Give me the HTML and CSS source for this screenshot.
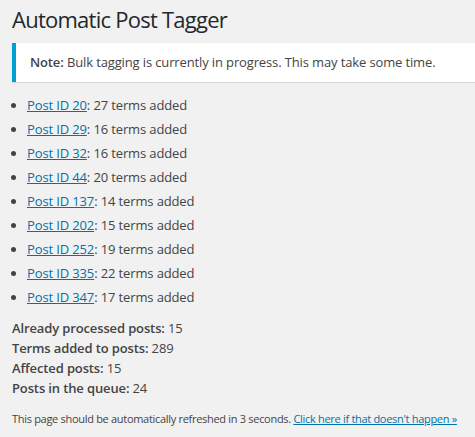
FILE: index.html
```html
<!DOCTYPE html>
<html>
<head>
<meta charset="utf-8">
<link rel="stylesheet" href="styles.css">
</head>
<body>
<div class="wrap">
  <h1 class="title">Automatic Post Tagger</h1>
  <div class="notice">
    <p><strong>Note:</strong> Bulk tagging is currently in progress. This may take some time.</p>
  </div>
  <ul class="posts">
    <li><a href="#">Post ID 20</a>: 27 terms added</li>
    <li><a href="#">Post ID 29</a>: 16 terms added</li>
    <li><a href="#">Post ID 32</a>: 16 terms added</li>
    <li><a href="#">Post ID 44</a>: 20 terms added</li>
    <li><a href="#">Post ID 137</a>: 14 terms added</li>
    <li><a href="#">Post ID 202</a>: 15 terms added</li>
    <li><a href="#">Post ID 252</a>: 19 terms added</li>
    <li><a href="#">Post ID 335</a>: 22 terms added</li>
    <li><a href="#">Post ID 347</a>: 17 terms added</li>
  </ul>
  <div class="stats">
    <div><strong>Already processed posts:</strong> 15</div>
    <div><strong>Terms added to posts:</strong> 289</div>
    <div><strong>Affected posts:</strong> 15</div>
    <div><strong>Posts in the queue:</strong> 24</div>
  </div>
  <p class="refresh">This page should be automatically refreshed in 3 seconds. <a href="#">Click here if that doesn't happen »</a></p>
</div>
</body>
</html>
```
FILE: styles.css
```css
html, body {
  margin: 0;
  padding: 0;
  background: #f1f1f1;
}
body {
  font-family: "Open Sans", sans-serif;
  font-size: 13px;
  letter-spacing: -0.13px;
  color: #444;
}
.wrap {
  padding: 0 0 0 12px;
}
.title {
  margin: 0;
  padding: 5px 0 0;
  font-size: 22px;
  font-weight: 400;
  letter-spacing: -0.75px;
  line-height: 29px;
  color: #23282d;
}
.notice {
  margin: 9px 0 14px;
  background: #fff;
  border-left: 4px solid #00a0d2;
  box-shadow: 0 1px 1px 0 rgba(0, 0, 0, 0.1);
  padding: 1px 12px;
}
.notice p {
  margin: 7px 0;
  padding: 2px;
  line-height: 19px;
}
.notice strong {
  font-weight: 600;
}
a {
  color: #0073aa;
  text-decoration: underline;
}
.posts {
  margin: 0;
  padding: 0 0 0 15px;
  list-style: disc outside;
}
.posts li {
  line-height: 18px;
  margin-bottom: 6px;
}
.stats {
  margin-top: 12px;
  line-height: 20px;
}
.stats strong {
  font-weight: 600;
}
.refresh {
  margin: 12px 0 0;
  font-size: 11px;
  letter-spacing: -0.3px;
  line-height: 18px;
  white-space: nowrap;
}
```
